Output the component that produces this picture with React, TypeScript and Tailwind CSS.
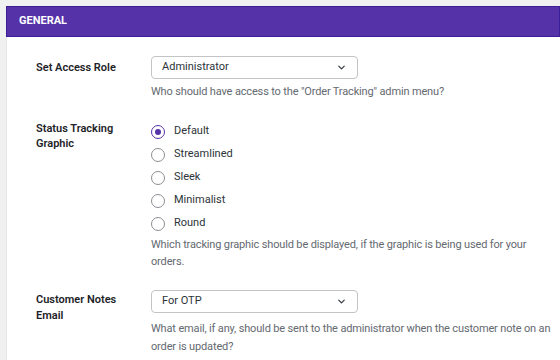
import { ChevronDown } from "lucide-react"

const font = { fontFamily: "Roboto, 'Noto Sans', sans-serif" }

function Select({ value }: { value: string }) {
  return (
    <div className="flex h-[23px] w-[207px] items-center justify-between rounded-[4px] border border-[#c3c4c7] bg-white pl-[10px] pr-[10px] text-[11px] text-[#2c3338]">
      <span>{value}</span>
      <ChevronDown className="h-[11px] w-[11px] text-[#2c3338]" strokeWidth={2.5} />
    </div>
  )
}

function Radio({ label, checked }: { label: string; checked?: boolean }) {
  return (
    <div className="flex h-[23px] items-center gap-[9px]">
      <span
        className={
          checked
            ? "flex h-[14px] w-[14px] items-center justify-center rounded-full border border-[#5532a8] bg-white"
            : "flex h-[14px] w-[14px] items-center justify-center rounded-full border border-[#8c8f94] bg-white"
        }
      >
        {checked && <span className="h-[6px] w-[6px] rounded-full bg-[#5532a8]" />}
      </span>
      <span className="text-[11px] text-[#2c3338]">{label}</span>
    </div>
  )
}

export default function App() {
  return (
    <div className="h-[360px] w-[560px] overflow-hidden bg-[#f0f0f1] pl-[6px] pt-[6px]" style={font}>
      <div className="flex h-[31px] items-center border border-[#3c1f98] bg-[#5532a8] px-[12px] text-[11px] font-bold text-white">
        GENERAL
      </div>
      <div className="h-full border-l border-[#e5e5e5] bg-white pl-[29px] pt-[19px]">
        {/* Access role */}
        <div className="flex">
          <div className="w-[115px] pt-[4px] text-[11px] font-semibold leading-[15px] text-[#1d2327]">Set Access Role</div>
          <div>
            <Select value="Administrator" />
            <p className="mt-[4px] text-[11px] leading-[17px] tracking-[-0.15px] text-[#646970]">
              Who should have access to the "Order Tracking" admin menu?
            </p>
          </div>
        </div>

        {/* Tracking graphic */}
        <div className="mt-[20px] flex">
          <div className="w-[115px] pt-[1px] text-[11px] font-semibold leading-[15px] text-[#1d2327]">
            Status Tracking
            <br />
            Graphic
          </div>
          <div>
            <Radio label="Default" checked />
            <Radio label="Streamlined" />
            <Radio label="Sleek" />
            <Radio label="Minimalist" />
            <Radio label="Round" />
            <p className="mt-[1px] w-[400px] text-[11px] leading-[17px] tracking-[-0.15px] text-[#646970]">
              Which tracking graphic should be displayed, if the graphic is being used for your orders.
            </p>
          </div>
        </div>

        {/* Customer notes */}
        <div className="mt-[20px] flex">
          <div className="w-[115px] pt-[2px] text-[11px] font-semibold leading-[16px] text-[#1d2327]">
            Customer Notes
            <br />
            Email
          </div>
          <div>
            <Select value="For OTP" />
            <p className="mt-[7px] w-[404px] text-[11px] leading-[18px] tracking-[-0.15px] text-[#646970]">
              What email, if any, should be sent to the administrator when the customer note on an order is updated?
            </p>
          </div>
        </div>
      </div>
    </div>
  )
}
